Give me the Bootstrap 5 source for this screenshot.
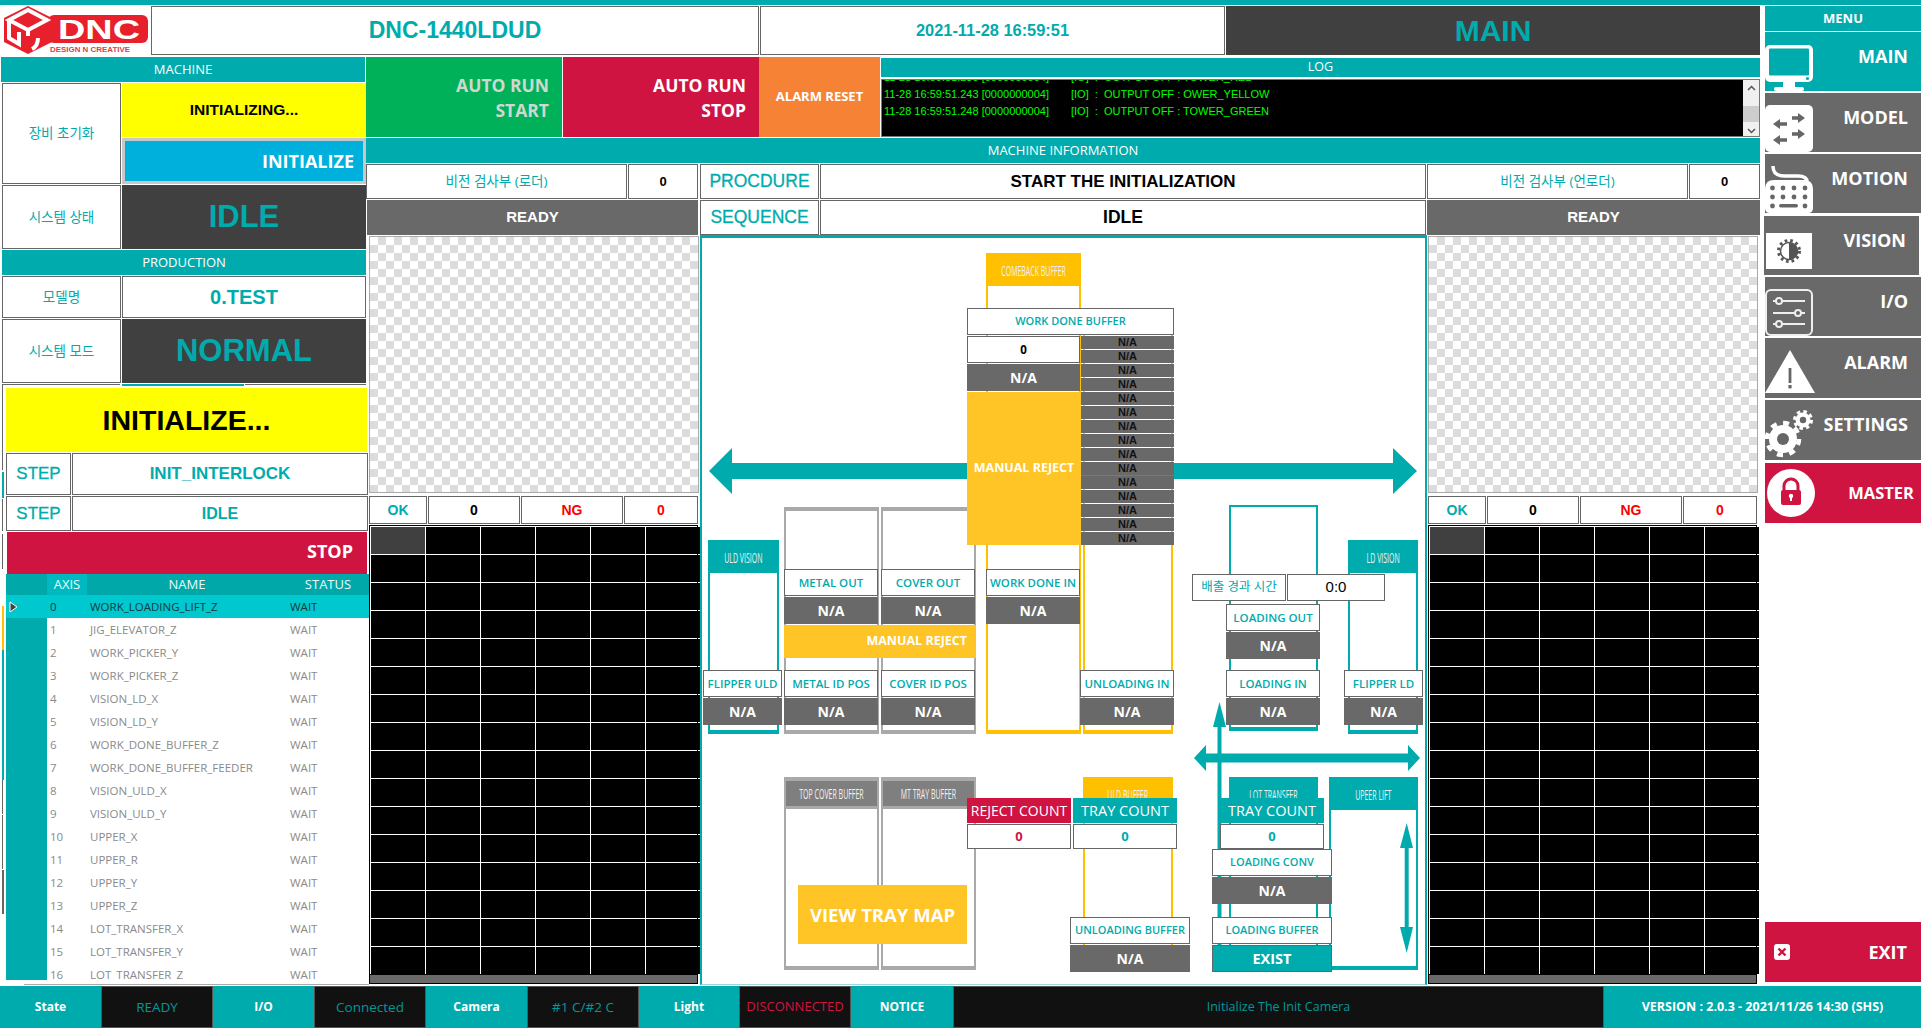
<!DOCTYPE html>
<html lang="ko">
<head>
<meta charset="UTF-8">
<title>DNC-1440LDUD</title>
<link href="https://cdn.jsdelivr.net/npm/bootstrap@5.3.0/dist/css/bootstrap.min.css" rel="stylesheet">
<style>
  :root { --teal:#00abad; --gray:#696969; --dark:#404040; --crim:#d01442; --amber:#ffc425; --line:#666; }
  html, body { margin:0; width:1921px; height:1028px; overflow:hidden; background:#fff; }
  body { font-family:"Open Sans","Noto Sans CJK KR",sans-serif; color:#000; }
  .top-strip { height:5px; background:var(--teal); }
  .app-main { height:981px; }
  .app-work { width:1760px; margin-right:5px; }
  .ari { font-family:"Liberation Sans","Noto Sans CJK KR",sans-serif; }
  .ctr { display:flex; align-items:center; justify-content:center; }
  .boxed { background:#fff; border:1px solid var(--line); color:var(--teal); }
  .sect { background:var(--teal); color:#fff; font-size:13px; height:25px; }
  .sect-m { margin-left:1px; width:364px; }
  .sect-p { margin:1px 0 0 2px; }
  .kr { font-size:13.5px; }
  .fill-dark { background:var(--dark); color:var(--teal); }
  .fill-gray { background:var(--gray); color:#fff; }

  .hdr-row { height:49px; margin-top:1px; }
  .hdr-logo { width:150px; }
  .hdr-title { width:608px; margin-left:1px; font-size:23px; font-weight:700; }
  .hdr-date { width:465px; margin-left:1px; font-size:16.4px; font-weight:700; }
  .hdr-page { width:534px; margin-left:1px; font-size:30px; font-weight:700; }
  .work-body { margin-top:2px; height:929px; }

  .left-col { width:366px; }
  .lbl-w { width:119px; margin-left:2px; }
  .val-w { width:244px; margin-left:1px; }
  .mt1 { margin-top:1px; }
  .h42 { height:42px; }
  .h64 { height:64px; }
  .h35 { height:35px; }
  .init-msg { height:54px; background:#ff0; font-size:15.5px; font-weight:700; }
  .init-btn { height:46px; margin-top:1px; background:#00b0dc; border:3px solid #c8c8c8; color:#fff; font-size:18px; font-weight:700; justify-content:flex-end; padding-right:9px; }
  .big-val { font-size:31px; font-weight:700; }
  .model-val { font-size:20px; font-weight:700; }
  .stray-row { height:4px; margin-top:1px; }
  .stray-row div { border-top:1px solid var(--line); }
  .stray-row .s1 { width:118px; margin-left:2px; border-left:1px solid var(--line); }
  .stray-row .s2 { width:122px; margin-left:2px; border-top:2px solid var(--teal); }
  .stray-row .s3 { width:121px; margin-left:1px; }
  .gutter { width:6px; height:598px; flex:none; }
  .gutter i { display:block; margin-left:2px; }
  .lower { width:363px; flex:none; }
  .init-big { height:64px; margin-right:2px; background:#ff0; font-size:28.5px; font-weight:700; }
  .step-k { width:65px; font-size:17px; -webkit-text-stroke:.3px var(--teal); }
  .step-v { width:296px; margin-left:1px; font-weight:700; }
  .fs17 { font-size:17px; }
  .fs16 { font-size:16px; }
  .stop-btn { height:42px; margin:1px 2px 0 1px; background:var(--crim); color:#fff; font-size:18px; font-weight:700; text-align:right; padding:6px 14px 0 0; }
  .axis-wrap { height:406px; overflow:hidden; }
  .axis-tbl { width:363px; table-layout:fixed; border-collapse:collapse; font-size:11.5px; color:#8a8a8a; }
  .axis-tbl .c1 { width:41px; } .axis-tbl .c2 { width:40px; } .axis-tbl .c3 { width:200px; } .axis-tbl .c4 { width:82px; }
  .axis-tbl th { background:#00a8aa; color:#e8fbfb; height:21px; font-size:13px; font-weight:400; text-align:center; padding:0; }
  .axis-tbl th.axis-on { background:#00b9c0; }
  .axis-tbl td { height:23px; padding:0 0 0 3px; white-space:nowrap; overflow:hidden; }
  .axis-tbl td.rh { background:var(--teal); padding:0 0 0 3px; line-height:0; }
  .axis-tbl tr.sel td { background:#00c8cf; color:#16393b; }
  .axis-end { height:5px; border-bottom:1px solid #aaa; margin-left:18px; }

  .mid-col { width:1394px; }
  .top-btns { height:80px; }
  .run-btn { width:196px; font-size:17.5px; font-weight:700; line-height:25px; text-align:right; padding:16px 13px 0 0; }
  .run-go { background:#00b15a; color:#cfd8cf; }
  .run-stop { background:var(--crim); color:#fff; margin-left:1px; }
  .alarm-btn { width:121px; background:#f58235; color:#fff; font-size:13px; font-weight:700; }
  .log-col { width:879px; margin-left:1px; }
  .log-hdr { height:19px; margin-top:1px; font-size:12.5px; }
  .log-box { height:58px; margin-top:2px; background:#000; border:1px solid #777; width:879px; }
  .log-view { flex:1; overflow:hidden; }
  .log-text { color:#0f0; font-size:11px; line-height:17px; padding-left:2px; margin-top:-11px; white-space:pre; }
  .log-text span { display:inline-block; width:187px; }
  .log-bar { width:16px; background:#f0f0f0; }
  .log-thumb { height:16px; width:16px; background:#cdcdcd; margin:15px 0; }
  .log-bar svg { display:block; margin:5px auto 0; }
  .log-bar svg.dn { margin-top:-9px; }
  .info-hdr { margin-top:1px; }
  .info-row { height:35px; margin-top:1px; }
  .w-vis { width:261px; }
  .w-cnt { width:70px; margin-left:1px; font-size:13px; font-weight:700; color:#000; }
  .w-key { width:119px; margin-left:2px; font-size:17.5px; -webkit-text-stroke:.3px var(--teal); }
  .w-mid { width:606px; margin-left:1px; font-size:17px; font-weight:700; color:#000; }
  .w-mid.big { font-size:17.5px; }
  .w-vis2 { width:261px; margin-left:1px; }
  .w-cnt2 { width:71px; margin-left:1px; font-size:13px; font-weight:700; color:#000; }
  .w-rdy { font-size:15px; font-weight:700; width:331px; margin-left:1px; }
  .w-rdy.wide { width:333px; }

  .vis-col { width:331px; margin-left:2px; }
  .vis-col.right { margin-left:0; }
  .checker { height:257px; margin:1px 0 0 1px; border:1px solid #aaa; background:repeating-conic-gradient(#dcdcdc 0 25%, #fff 0 50%) 0 0/16px 16px; }
  .okng { height:28px; margin:3px 0 0 1px; font-size:14px; font-weight:700; }
  .okng .boxed + .boxed { margin-left:1px; }
  .o1 { width:58px; } .o2 { width:92px; color:#000; } .o3 { width:102px; color:#f00; } .o4 { width:74px; color:#f00; }
  .cell-grid { margin:1px 0 0 1px; width:329px; background:#fff; border:1px solid #000; padding:1px 0 0 1px; display:grid; grid-template-columns:repeat(6,54px); grid-auto-rows:27px; gap:1px; height:450px; }
  .cell-grid div { background:#000; }
  .cell-grid div:first-child { background:var(--dark); }
  .cell-scroll { height:9px; width:329px; margin-left:1px; background:var(--gray); border:1px solid #000; border-top:0; }

  .canvas { width:727px; height:750px; margin-left:1px; position:relative; border:solid var(--teal); border-width:3px 2px 1px 2px; border-bottom-color:#9fd8d8; flex:none; }
  .nd { position:absolute; display:flex; align-items:center; justify-content:center; white-space:nowrap; box-sizing:border-box; }
  .nd-lbl { background:#fff; border:1px solid var(--line); color:var(--teal); font-size:11.5px; font-weight:600; }
  .nd-na { background:var(--gray); color:#fff; font-size:14px; font-weight:700; }
  .nd-mini { background:var(--gray); color:#111; font-size:11px; font-weight:700; font-family:"Liberation Sans",sans-serif; }
  .nd-amber { background:var(--amber); color:#fff; font-size:12.5px; font-weight:700; }
  .nd-teal { background:var(--teal); color:#fff; font-size:14.5px; }
  .nd-crim { background:var(--crim); color:#fff; font-size:14.5px; }
  .nd-col { border-style:solid; border-width:2px 2px 4px 2px; align-items:flex-start; }
  .nd-head { width:100%; display:flex; justify-content:center; align-items:center; color:#f2f2f2; font-size:14px; }
  .nd-head b { font-weight:400; display:inline-block; transform:scaleX(.5); }
  .nd-svg { position:absolute; left:0; top:0; }

  .menu-col { width:156px; }
  .menu-hd { height:25px; margin-top:1px; background:var(--teal); color:#fff; font-size:13px; font-weight:700; }
  .menu-btn { height:59px; margin-top:2px; background:var(--gray); color:#fff; font-weight:700; font-size:18px; }
  .menu-btn span { margin-left:auto; padding:12px 13px 0 0; line-height:24px; }
  .menu-btn svg { align-self:flex-end; flex:none; }
  .menu-main { background:var(--teal); margin-top:1px; }
  .menu-vis { margin:3px 2px 0 -1px; }
  .menu-vis svg { margin:0 0 6px 2px; }
  .menu-tall { height:60px; }
  .menu-tall svg.lift { margin-bottom:4px; }
  .menu-red { background:var(--crim); margin-top:3px; }
  .menu-red svg { margin:0 0 6px 2px; }
  .menu-red span { font-size:16.5px; padding:0 7px 0 0; align-self:center; }
  .menu-exit { height:60px; margin-top:auto; margin-bottom:4px; background:var(--crim); color:#fff; font-weight:700; font-size:18px; }
  .menu-exit svg { margin-left:9px; }
  .menu-exit span { margin-left:auto; padding-right:14px; }

  .status-bar { height:42px; color:#fff; }
  .st-k { background:var(--teal); font-size:12px; font-weight:700; flex:none; width:101px; }
  .st-k.n100 { width:100px; }
  .st-k.n102 { width:102px; }
  .st-v { background:#111; border:1px solid #555; color:#00989a; font-size:13.5px; flex:none; width:112px; }
  .st-bad { color:var(--crim); font-size:13px; }
  .st-msg { width:651px; font-size:12.5px; }
  .st-ver { background:var(--teal); font-size:12.5px; font-weight:700; flex:1; }
</style>
</head>
<body>
<div class="top-strip"></div>
<div class="app-main d-flex">
  <div class="app-work d-flex flex-column">
    <!-- header -->
    <div class="hdr-row d-flex">
      <div class="hdr-logo">
        <svg width="150" height="49" viewBox="0 0 150 49">
          <rect x="48" y="9" width="100" height="28" rx="6" fill="#e8202c"/>
          <polygon points="28,0 52,12 52,36 28,48 4,36 4,12" fill="#e8202c"/>
          <path d="M9 14 28 4 47 14 28 24z M9 14V32l10 6V26 M28 24V30 M38 32c0 8-4 10-6 11" fill="none" stroke="#fff" stroke-width="4"/>
          <text x="58" y="33" font-family="Liberation Sans" font-weight="700" font-size="27" fill="#fff" textLength="82" lengthAdjust="spacingAndGlyphs">DNC</text>
          <text x="50" y="46" font-family="Liberation Sans" font-weight="700" font-size="7.5" fill="#d8404a" textLength="80" lengthAdjust="spacingAndGlyphs">DESIGN N CREATIVE</text>
        </svg>
      </div>
      <div class="hdr-title boxed ctr ari">DNC-1440LDUD</div>
      <div class="hdr-date boxed ctr ari">2021-11-28 16:59:51</div>
      <div class="hdr-page fill-dark ctr ari">MAIN</div>
    </div>

    <div class="work-body d-flex">
      <!-- left panel -->
      <div class="left-col">
        <div class="sect sect-m ctr">MACHINE</div>
        <div class="d-flex mt1">
          <div class="lbl-w boxed ctr kr">장비 초기화</div>
          <div class="val-w">
            <div class="init-msg ctr ari">INITIALIZING...</div>
            <div class="init-btn ctr">INITIALIZE</div>
          </div>
        </div>
        <div class="d-flex mt1 h64">
          <div class="lbl-w boxed ctr kr">시스템 상태</div>
          <div class="val-w fill-dark ctr ari big-val">IDLE</div>
        </div>
        <div class="sect sect-p ctr">PRODUCTION</div>
        <div class="d-flex mt1 h42">
          <div class="lbl-w boxed ctr kr">모델명</div>
          <div class="val-w boxed ctr ari model-val">0.TEST</div>
        </div>
        <div class="d-flex mt1 h64">
          <div class="lbl-w boxed ctr kr">시스템 모드</div>
          <div class="val-w fill-dark ctr ari big-val">NORMAL</div>
        </div>
        <div class="stray-row d-flex"><div class="s1"></div><div class="s2"></div><div class="s3"></div></div>
        <div class="d-flex">
          <div class="gutter" id="gutter"></div>
          <div class="lower">
            <div class="init-big ctr ari">INITIALIZE...</div>
            <div class="d-flex mt1 h42">
              <div class="step-k boxed ctr ari">STEP</div>
              <div class="step-v boxed ctr ari fs17">INIT_INTERLOCK</div>
            </div>
            <div class="d-flex mt1 h35">
              <div class="step-k boxed ctr ari">STEP</div>
              <div class="step-v boxed ctr ari fs16">IDLE</div>
            </div>
            <div class="stop-btn">STOP</div>
            <div class="axis-wrap">
              <table class="axis-tbl">
                <colgroup><col class="c1"><col class="c2"><col class="c3"><col class="c4"></colgroup>
                <thead><tr><th></th><th class="axis-on">AXIS</th><th>NAME</th><th>STATUS</th></tr></thead>
                <tbody id="axisBody"></tbody>
              </table>
            </div>
            <div class="axis-end"></div>
          </div>
        </div>
      </div>

      <!-- middle -->
      <div class="mid-col">
        <div class="top-btns d-flex">
          <div class="run-btn run-go">AUTO RUN<br>START</div>
          <div class="run-btn run-stop">AUTO RUN<br>STOP</div>
          <div class="alarm-btn ctr">ALARM RESET</div>
          <div class="log-col">
            <div class="log-hdr sect ctr">LOG</div>
            <div class="log-box d-flex">
              <div class="log-view">
                <div class="log-text ari"><span>11-28 16:59:51.239 [0000000004]</span>[IO]  :  OUTPUT OFF : TOWER_RED
<span>11-28 16:59:51.243 [0000000004]</span>[IO]  :  OUTPUT OFF : OWER_YELLOW
<span>11-28 16:59:51.248 [0000000004]</span>[IO]  :  OUTPUT OFF : TOWER_GREEN</div>
              </div>
              <div class="log-bar">
                <svg width="9" height="6" viewBox="0 0 9 6"><path d="M1 5 4.5 1.5 8 5" fill="none" stroke="#555" stroke-width="1.5"/></svg>
                <div class="log-thumb"></div>
                <svg class="dn" width="9" height="6" viewBox="0 0 9 6"><path d="M1 1 4.5 4.5 8 1" fill="none" stroke="#555" stroke-width="1.5"/></svg>
              </div>
            </div>
          </div>
        </div>
        <div class="sect info-hdr ctr">MACHINE INFORMATION</div>
        <div class="info-row d-flex">
          <div class="w-vis boxed ctr kr">비전 검사부 (로더)</div>
          <div class="w-cnt boxed ctr ari">0</div>
          <div class="w-key boxed ctr ari">PROCDURE</div>
          <div class="w-mid boxed ctr ari">START THE INITIALIZATION</div>
          <div class="w-vis2 boxed ctr kr">비전 검사부 (언로더)</div>
          <div class="w-cnt2 boxed ctr ari">0</div>
        </div>
        <div class="info-row d-flex">
          <div class="fill-gray w-rdy ctr ari">READY</div>
          <div class="w-key boxed ctr ari">SEQUENCE</div>
          <div class="w-mid big boxed ctr ari">IDLE</div>
          <div class="fill-gray w-rdy wide ctr ari">READY</div>
        </div>
        <div class="d-flex">
          <div class="vis-col">
            <div class="checker"></div>
            <div class="okng d-flex ari">
              <div class="boxed ctr o1">OK</div><div class="boxed ctr o2">0</div><div class="boxed ctr o3">NG</div><div class="boxed ctr o4">0</div>
            </div>
            <div class="cell-grid"></div>
            <div class="cell-scroll"></div>
          </div>
          <div class="canvas" id="canvas"></div>
          <div class="vis-col right">
            <div class="checker"></div>
            <div class="okng d-flex ari">
              <div class="boxed ctr o1">OK</div><div class="boxed ctr o2">0</div><div class="boxed ctr o3">NG</div><div class="boxed ctr o4">0</div>
            </div>
            <div class="cell-grid"></div>
            <div class="cell-scroll"></div>
          </div>
        </div>
      </div>
    </div>
  </div>

  <!-- menu -->
  <div class="menu-col d-flex flex-column">
    <div class="menu-hd ctr">MENU</div>
    <div class="menu-btn menu-main d-flex">
      <svg width="48" height="46" viewBox="0 0 48 46"><rect width="48" height="37" rx="5" fill="#fff"/><rect x="4" y="3.5" width="40" height="27" rx="1" fill="#00abad"/><circle cx="42.5" cy="33.5" r="1.6" fill="#00abad"/><rect x="18" y="37" width="12" height="6" fill="#fff"/><rect x="9" y="42" width="30" height="4" rx="2" fill="#fff"/></svg>
      <span>MAIN</span>
    </div>
    <div class="menu-btn d-flex">
      <svg width="48" height="47" viewBox="0 0 48 47"><rect width="48" height="47" rx="5" fill="#fff"/><g fill="none" stroke="#666" stroke-width="3.4"><path d="M14 19H22M27 13H35M14 35H22M27 29H35"/></g><g fill="#666"><path d="M8 19 15 14V24zM40 13 33 8V18zM8 35 15 30V40zM40 29 33 24V34z"/></g></svg>
      <span>MODEL</span>
    </div>
    <div class="menu-btn d-flex">
      <svg width="48" height="48" viewBox="0 0 48 48"><path d="M8 1C8 9 13 11 20 11H33C39 11 42 13 42 17" fill="none" stroke="#fff" stroke-width="3.5"/><path d="M0 24Q0 15 9 15H39Q48 15 48 24V43Q48 48 43 48H5Q0 48 0 43Z" fill="#fff"/><g fill="#666"><circle cx="7.5" cy="23" r="2.4"/><circle cx="18" cy="23" r="2.4"/><circle cx="29" cy="23" r="2.4"/><circle cx="40" cy="23" r="2.4"/><circle cx="7.5" cy="32" r="2.4"/><circle cx="18" cy="32" r="2.4"/><circle cx="29" cy="32" r="2.4"/><circle cx="40" cy="32" r="2.4"/><circle cx="7.5" cy="41" r="2.4"/><rect x="14" y="39" width="19" height="3.6" rx="1.8"/><circle cx="40" cy="41" r="2.4"/></g></svg>
      <span>MOTION</span>
    </div>
    <div class="menu-btn menu-vis d-flex">
      <svg width="46" height="36" viewBox="0 0 46 36"><rect width="46" height="36" fill="#fff"/><circle cx="23" cy="18" r="10.5" fill="none" stroke="#555" stroke-width="3" stroke-dasharray="2.6 3"/><circle cx="23" cy="18" r="8.5" fill="#fff" stroke="#555" stroke-width="1.5"/><path d="M23 9.500a8.500 8.500 0 0 1 0 17z" fill="#555"/></svg>
      <span>VISION</span>
    </div>
    <div class="menu-btn d-flex">
      <svg width="48" height="47" viewBox="0 0 48 47"><rect x="1" y="1" width="46" height="45" rx="5" fill="none" stroke="#eee" stroke-width="2"/><g stroke="#eee" stroke-width="2" fill="#666"><path d="M8 12H40M8 24H40M8 35H40"/><circle cx="14" cy="12" r="3"/><circle cx="33" cy="24" r="3"/><circle cx="14" cy="35" r="3"/></g></svg>
      <span>I/O</span>
    </div>
    <div class="menu-btn menu-tall d-flex">
      <svg class="lift" width="50" height="44" viewBox="0 0 50 44"><polygon points="25,0 50,43 0,43" fill="#fff"/><rect x="23.600" y="18" width="2.800" height="15" fill="#666"/><rect x="23.400" y="35" width="3.200" height="3.400" fill="#666"/></svg>
      <span>ALARM</span>
    </div>
    <div class="menu-btn menu-tall d-flex">
      <svg width="50" height="50" viewBox="0 0 50 50"><circle cx="18" cy="29" r="14" fill="#fff"/><circle cx="18" cy="29" r="16" fill="none" stroke="#fff" stroke-width="4.500" stroke-dasharray="6 6.500"/><circle cx="18" cy="29" r="6" fill="#666"/><circle cx="38" cy="10" r="7.500" fill="#fff"/><circle cx="38" cy="10" r="8.500" fill="none" stroke="#fff" stroke-width="3" stroke-dasharray="3.500 3.200"/><circle cx="38" cy="10" r="3.200" fill="#666"/></svg>
      <span>SETTINGS</span>
    </div>
    <div class="menu-btn menu-tall menu-red d-flex">
      <svg width="48" height="48" viewBox="0 0 48 48"><circle cx="24" cy="24" r="24" fill="#fff"/><path d="M17 22V17a7 7 0 0 1 14 0V22" fill="none" stroke="#d01442" stroke-width="3"/><rect x="14" y="21" width="20" height="15" rx="2" fill="#d01442"/><circle cx="24" cy="27" r="2.200" fill="#fff"/><rect x="23" y="27" width="2" height="5" fill="#fff"/></svg>
      <span>MASTER</span>
    </div>
    <div class="menu-exit d-flex align-items-center">
      <svg width="16" height="16" viewBox="0 0 16 16"><rect width="16" height="16" rx="3" fill="#fff"/><path d="M4.500 4.500 11.500 11.500M11.500 4.500 4.500 11.500" stroke="#d01442" stroke-width="2.400"/></svg>
      <span>EXIT</span>
    </div>
  </div>
</div>

<!-- status bar -->
<div class="status-bar d-flex">
  <div class="st-k ctr">State</div>
  <div class="st-v ctr">READY</div>
  <div class="st-k ctr">I/O</div>
  <div class="st-v ctr">Connected</div>
  <div class="st-k ctr">Camera</div>
  <div class="st-v ctr">#1 C/#2 C</div>
  <div class="st-k n100 ctr">Light</div>
  <div class="st-v st-bad ctr">DISCONNECTED</div>
  <div class="st-k n102 ctr">NOTICE</div>
  <div class="st-v st-msg ctr">Initialize The Init Camera</div>
  <div class="st-ver ctr">VERSION : 2.0.3 - 2021/11/26 14:30 (SHS)</div>
</div>

<script src="https://cdn.jsdelivr.net/npm/bootstrap@5.3.0/dist/js/bootstrap.bundle.min.js"></script>
<script>
  // axis table
  const axes = ['WORK_LOADING_LIFT_Z','JIG_ELEVATOR_Z','WORK_PICKER_Y','WORK_PICKER_Z','VISION_LD_X','VISION_LD_Y',
    'WORK_DONE_BUFFER_Z','WORK_DONE_BUFFER_FEEDER','VISION_ULD_X','VISION_ULD_Y','UPPER_X','UPPER_R','UPPER_Y','UPPER_Z',
    'LOT_TRANSFER_X','LOT_TRANSFER_Y','LOT_TRANSFER_Z'];
  const tb = document.getElementById('axisBody');
  axes.forEach((name,i)=>{
    const tr = document.createElement('tr');
    if(i===0) tr.className = 'sel';
    const rh = document.createElement('td');
    rh.className = 'rh';
    if(i===0) rh.innerHTML = '<svg width="9" height="12" viewBox="0 0 9 12"><path d="M1 1 8 6 1 11Z" fill="#444" stroke="#fff" stroke-width="1"/></svg>';
    tr.appendChild(rh);
    [i,name,'WAIT'].forEach(t=>{ const td=document.createElement('td'); td.textContent=t; tr.appendChild(td); });
    tb.appendChild(tr);
  });

  // black vision cells
  document.querySelectorAll('.cell-grid').forEach(g=>{
    for(let i=0;i<96;i++) g.appendChild(document.createElement('div'));
  });

  // leftovers showing at the very left edge
  const gut = document.getElementById('gutter');
  [[82,1,'#666'],[2,0,'#fff'],[26,2,'#00abad'],[1,0,'#fff'],[32,1,'#666'],[3,0,'#fff'],[35,1,'#666'],[37,0,'#fff'],[44,2,'#ffc000'],[130,2,'#00abad'],[34,1,'#666'],[1,0,'#fff'],[54,1,'#666'],[1,0,'#fff'],[44,2,'#666']].forEach(s=>{
    const i = document.createElement('i');
    i.style.height = s[0]+'px'; i.style.width = s[1]+'px'; i.style.background = s[2];
    gut.appendChild(i);
  });

  // machine diagram, coordinates are screen pixels
  const OX = 702, OY = 238;
  const cv = document.getElementById('canvas');
  const TEAL='#00abad', AMB='#ffc000', GRY='#a9a9a9';

  const ns = 'http://www.w3.org/2000/svg';
  const svg = document.createElementNS(ns,'svg');
  svg.setAttribute('class','nd-svg');
  svg.setAttribute('width',723); svg.setAttribute('height',746);
  svg.setAttribute('viewBox',[OX,OY,723,746].join(' '));
  svg.innerHTML = '<g fill="'+TEAL+'">'
    + '<path d="M709 471 732 448V463H1393V448L1417 471 1393 494V479H732V494Z"/>'
    + '<path d="M1194 758 1206 745V753.500H1408V745L1420 758 1408 771V762.500H1206V771Z"/>'
    + '<path d="M1219.500 702 1226 727H1221.500V972H1217.500V727H1213Z"/>'
    + '<path d="M1406.700 823 1413 848H1408.700V927H1413L1406.700 953 1400 927H1404.700V848H1400Z"/>'
    + '</g>';

  function place(el,x,y,w,h){
    el.style.left=(x-OX)+'px'; el.style.top=(y-OY)+'px'; el.style.width=w+'px'; el.style.height=h+'px';
  }
  function col(x,y,w,h,color,title,headH,headBg){
    const c = document.createElement('div');
    c.className='nd nd-col';
    place(c,x,y,w,h);
    c.style.borderColor=color;
    if(color===GRY) c.style.borderTopWidth='4px';
    if(title){
      const hd=document.createElement('div');
      hd.className='nd-head';
      hd.style.height=headH+'px';
      hd.style.background=headBg||color;
      if(headBg) hd.style.boxShadow='0 3px 0 '+color;
      const b=document.createElement('b'); b.textContent=title; hd.appendChild(b);
      c.appendChild(hd);
    }
    cv.appendChild(c);
  }
  function nd(cls,x,y,w,h,text,extra){
    const el=document.createElement('div');
    el.className='nd '+cls;
    el.textContent=text;
    place(el,x,y,w,h);
    if(extra) Object.assign(el.style,extra);
    cv.appendChild(el);
  }

  // tall columns first, they sit behind the labels
  col(708,540,71,194,TEAL,'ULD VISION',31);
  col(784,507,95,227,GRY);
  col(881,507,95,227,GRY);
  col(986,253,95,481,AMB,'COMEBACK BUFFER',31);
  col(1083,315,90,419,AMB);
  col(1229,505,89,226,TEAL);
  col(1348,540,70,194,TEAL,'LD VISION',31);
  col(784,777,95,193,GRY,'TOP COVER BUFFER',25,'#7f7f7f');
  col(881,777,95,193,GRY,'MT TRAY BUFFER',25,'#7f7f7f');
  col(1083,777,90,193,AMB,'ULD BUFFER',31);
  col(1229,777,89,193,TEAL,'LOT TRANSFER',31);
  col(1329,777,89,193,TEAL,'UPEER LIFT',31);
  cv.appendChild(svg);

  const small = {fontSize:'11px'};
  nd('nd-lbl',967,308,207,27,'WORK DONE BUFFER',small);
  nd('nd-lbl',967,336,113,27,'0',{color:'#000',fontWeight:700});
  nd('nd-na',967,364,113,27,'N/A');
  nd('nd-amber',967,392,114,153,'MANUAL REJECT');
  for(let i=0;i<15;i++) nd('nd-mini',1081,336+i*14,93,13,'N/A');

  [[784,94,'METAL OUT',569],[881,94,'COVER OUT',569],[986,94,'WORK DONE IN',569],
   [703,79,'FLIPPER ULD',670],[784,94,'METAL ID POS',670],[881,94,'COVER ID POS',670],[1080,94,'UNLOADING IN',670],
   [1226,94,'LOADING OUT',604],[1226,94,'LOADING IN',670],[1344,79,'FLIPPER LD',670]].forEach(n=>{
    nd('nd-lbl',n[0],n[3],n[1],27,n[2]);
    nd('nd-na',n[0],n[3]+28,n[1],27,'N/A');
  });
  nd('nd-amber',784,625,192,33,'MANUAL REJECT',{justifyContent:'flex-end',paddingRight:'9px'});

  nd('nd-lbl',1192,574,94,27,'배출 경과 시간',{fontWeight:400,fontSize:'12.5px'});
  nd('nd-lbl',1287,574,98,27,'0:0',{color:'#000',fontWeight:400,fontSize:'15px',fontFamily:'"Liberation Sans",sans-serif'});

  nd('nd-amber',798,885,169,59,'VIEW TRAY MAP',{fontSize:'18.5px'});
  nd('nd-crim',967,798,104,25,'REJECT COUNT',{fontSize:'14px'});
  nd('nd-lbl',967,824,104,25,'0',{color:'#d01442',fontWeight:700,fontSize:'13px'});
  nd('nd-teal',1073,798,104,25,'TRAY COUNT');
  nd('nd-lbl',1073,824,104,25,'0',{fontWeight:700,fontSize:'13px'});
  nd('nd-lbl',1070,917,120,27,'UNLOADING BUFFER',small);
  nd('nd-na',1070,945,120,27,'N/A');

  nd('nd-teal',1220,798,104,25,'TRAY COUNT');
  nd('nd-lbl',1220,824,104,25,'0',{fontWeight:700,fontSize:'13px'});
  nd('nd-lbl',1212,849,120,27,'LOADING CONV',small);
  nd('nd-na',1212,877,120,27,'N/A');
  nd('nd-lbl',1212,917,120,27,'LOADING BUFFER',small);
  nd('nd-teal',1212,945,120,27,'EXIST',{fontWeight:700,border:'1px solid #666'});
</script>
</body>
</html>
